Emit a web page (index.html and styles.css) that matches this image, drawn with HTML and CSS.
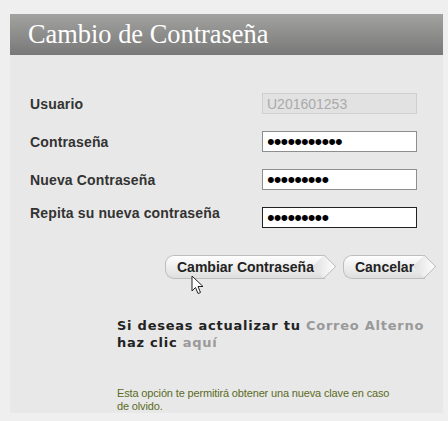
FILE: index.html
```html
<!DOCTYPE html>
<html lang="es">
<head>
    <meta charset="UTF-8">
    <meta name="viewport" content="width=device-width, initial-scale=1.0">
    <title>Cambio de Contraseña</title>
    <link rel="stylesheet" href="styles.css">
</head>
<body>

<div class="panel">
    <div class="panel-header">
        <h1>Cambio de Contraseña</h1>
    </div>

    <form class="pass-form">
        <div class="form-grid">
            <label class="field-label">Usuario</label>
            <input type="text" class="field-input field-disabled" value="U201601253" disabled>

            <label class="field-label">Contraseña</label>
            <input type="password" class="field-input" value="12345678901">

            <label class="field-label">Nueva Contraseña</label>
            <input type="password" class="field-input" value="123456789">

            <label class="field-label field-label-up">Repita su nueva contraseña</label>
            <input type="password" class="field-input field-focus" value="123456789">
        </div>

        <div class="actions">
            <button type="button" class="arrow-btn">Cambiar Contraseña</button>
            <button type="button" class="arrow-btn">Cancelar</button>
            <!-- mouse pointer captured in the screenshot -->
            <svg class="pointer" width="13" height="20" viewBox="0 0 13 20">
                <path d="M1 1 L1 16 L4.5 12.5 L7 18.5 L9.5 17.5 L7 11.5 L12 11.5 Z" fill="#fff" stroke="#222" stroke-width="1"/>
            </svg>
        </div>
    </form>

    <div class="alt-mail">
        <p class="alt-mail-text">Si deseas actualizar tu <a href="#" class="alt-link">Correo Alterno</a><br>haz clic <a href="#" class="alt-link">aquí</a></p>
        <p class="alt-mail-note">Esta opción te permitirá obtener una nueva clave en caso de olvido.</p>
    </div>
</div>

</body>
</html>
```

FILE: styles.css
```css
body {
    margin: 0;
    padding: 14px 5px 0 10px;
    background: #efefef;
    font-family: "Liberation Sans", Arial, sans-serif;
}
.panel {
    width: 433px;
    height: 399px;
    background: #e8e8e8;
}
.panel-header {
    height: 41px;
    background: linear-gradient(#a2a3a0, #787878);
    padding-left: 18px;
}
.panel-header h1 {
    margin: 0;
    font-family: "Liberation Serif", "Times New Roman", serif;
    font-weight: normal;
    font-size: 26.4px;
    line-height: 41px;
    color: #fff;
}
.pass-form {
    padding: 38px 0 0 20px;
}
.form-grid {
    display: grid;
    grid-template-columns: 232px 156px;
    row-gap: 17px;
    align-items: center;
}
.field-label {
    font-size: 14px;
    font-weight: bold;
    letter-spacing: 0.15px;
    color: #333;
}
.field-label-up {
    margin: -5px 0 5px;
}
.field-input {
    box-sizing: border-box;
    width: 155px;
    height: 21px;
    margin: 0;
    padding: 0 4px;
    border: 1px solid #8e8e8e;
    background: #fff;
    font-family: "Liberation Sans", Arial, sans-serif;
    font-size: 22px;
    letter-spacing: -0.9px;
    color: #000;
    outline: none;
}
.field-disabled {
    background: #e2e2e2;
    border-color: #cfcfcf;
    font-size: 14px;
    color: #aaa;
    letter-spacing: 0;
}
.field-focus {
    border-color: #222;
}
.actions {
    position: relative;
    display: flex;
    gap: 18px;
    padding: 27px 0 0 135px;
}
.arrow-btn {
    position: relative;
    height: 24px;
    padding: 0 11px 0 11px;
    border: 1px solid #bdbdbd;
    border-right: none;
    border-radius: 9px 0 0 9px;
    background: linear-gradient(#fefefe, #dedede);
    font-family: "Liberation Sans", Arial, sans-serif;
    font-size: 14px;
    font-weight: bold;
    color: #222;
    cursor: pointer;
}
.arrow-btn::after {
    content: "";
    position: absolute;
    top: 2px;
    right: -8px;
    width: 16px;
    height: 16px;
    border-top: 1px solid #bdbdbd;
    border-right: 1px solid #bdbdbd;
    border-radius: 0 2px 0 0;
    background: linear-gradient(45deg, #dedede, #fefefe);
    transform: rotate(45deg);
}
.pointer {
    position: absolute;
    left: 161px;
    top: 47px;
}
.alt-mail {
    padding: 38px 0 0 107px;
}
.alt-mail-text {
    margin: 0;
    font-family: "DejaVu Sans", Verdana, sans-serif;
    font-size: 13px;
    font-weight: bold;
    line-height: 17px;
    letter-spacing: 0.75px;
    color: #222;
}
.alt-link {
    color: #999;
    text-decoration: none;
}
.alt-mail-note {
    width: 278px;
    margin: 36px 0 0;
    font-size: 11px;
    line-height: 13px;
    letter-spacing: -0.15px;
    color: #5b6b1f;
}
```
